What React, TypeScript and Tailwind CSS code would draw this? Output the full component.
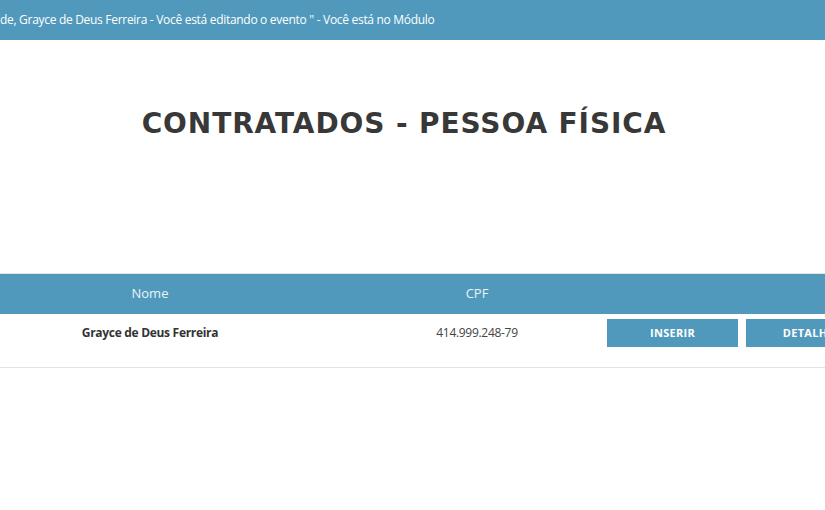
export default function App() {
  return (
    <div className="min-h-[510px] w-[825px] overflow-hidden bg-white font-['Open_Sans',sans-serif]">
      <div className="flex h-10 items-center whitespace-nowrap bg-[#5099bc] text-[12px] tracking-[-0.3px] text-white">
        de, Grayce de Deus Ferreira - Você está editando o evento '' - Você está no Módulo
      </div>

      <div className="w-[808px] pt-[64px] text-center">
        <h1 className="font-['DejaVu_Sans',sans-serif] text-[28px] font-bold leading-[40px] tracking-[0.9px] text-[#383838]">
          CONTRATADOS - PESSOA FÍSICA
        </h1>
      </div>

      <div className="mt-[129px] w-[880px] border-t border-[#e4e4e4]">
        <div className="grid h-10 grid-cols-[354px_246px_1fr] items-center bg-[#5099bc] text-[13px] text-[#eaf3f8]">
          <div className="pr-[54px] text-center">Nome</div>
          <div className="text-center">CPF</div>
          <div />
        </div>
        <div className="grid h-[54px] grid-cols-[354px_246px_1fr] items-start border-b border-[#e4e4e4] pt-[5px] text-[12px] leading-[28px] tracking-[-0.3px]">
          <div className="pr-[54px] text-center font-bold text-[#333]">Grayce de Deus Ferreira</div>
          <div className="text-center text-[#444]">414.999.248-79</div>
          <div className="flex gap-2 pl-[7px]">
            <button className="h-7 w-[131px] bg-[#5099bc] text-[11px] font-bold tracking-[0.3px] text-white">INSERIR</button>
            <button className="h-7 w-[131px] bg-[#5099bc] text-[11px] font-bold tracking-[0.3px] text-white">DETALHES</button>
          </div>
        </div>
      </div>
    </div>
  );
}
